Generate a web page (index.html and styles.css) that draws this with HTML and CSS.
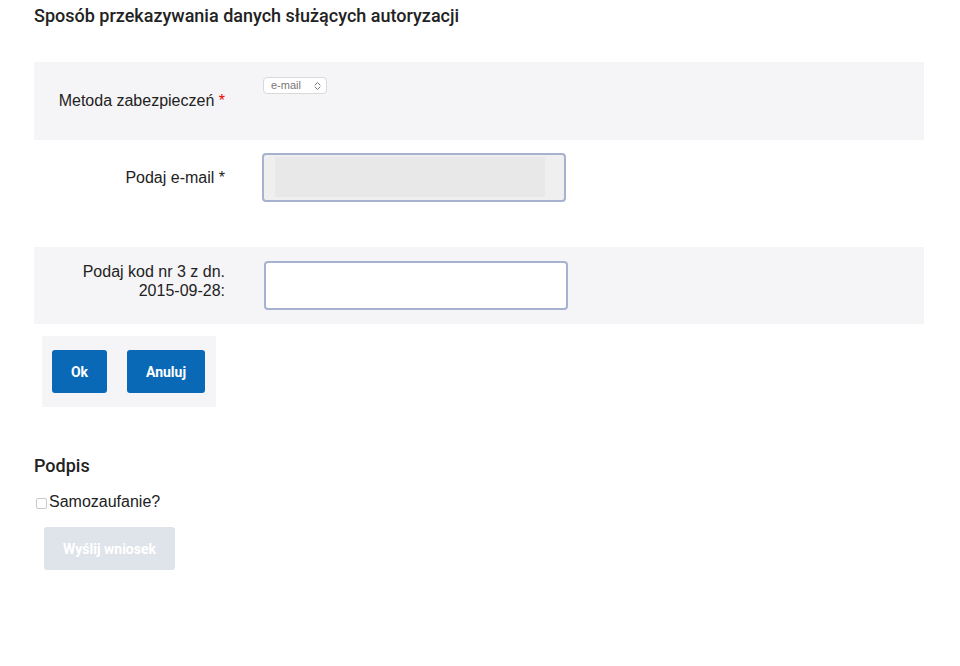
FILE: index.html
```html
<!DOCTYPE html>
<html lang="pl">
<head>
<meta charset="utf-8">
<title>Autoryzacja</title>
<link rel="stylesheet" href="styles.css">
</head>
<body>
<div class="page">
  <h1 class="title">Sposób przekazywania danych służących autoryzacji</h1>
  <div class="form">
    <div class="row row-method">
      <div class="label">Metoda zabezpieczeń <span class="req">*</span></div>
      <div class="field">
        <div class="select">
          <span class="select-text">e-mail</span>
          <svg class="chev" width="7" height="10" viewBox="0 0 7 10"><path d="M1 4 L3.5 1.5 L6 4 M1 6 L3.5 8.5 L6 6" fill="none" stroke="#777" stroke-width="1" stroke-linecap="round" stroke-linejoin="round"/></svg>
        </div>
      </div>
    </div>
    <div class="row row-email">
      <div class="label label-single">Podaj e-mail *</div>
      <div class="field">
        <div class="input input-filled"><span class="blur"></span></div>
      </div>
    </div>
    <div class="row row-code">
      <div class="label label-multi">Podaj kod nr 3 z dn. 2015-09-28:</div>
      <div class="field field-code">
        <div class="input"></div>
      </div>
    </div>
  </div>
  <div class="actions">
    <button class="btn btn-primary">Ok</button>
    <button class="btn btn-primary">Anuluj</button>
  </div>
  <h2 class="subtitle">Podpis</h2>
  <label class="check"><span class="box"></span>Samozaufanie?</label>
  <button class="btn btn-disabled">Wyślij wniosek</button>
</div>
</body>
</html>
```
FILE: styles.css
```css
* { box-sizing: border-box; }
html, body { margin: 0; padding: 0; background: #fff; }
body { font-family: "Liberation Sans", Arial, sans-serif; color: #222; }
.page { padding: 6px 36px 0 34px; width: 960px; }
.title {
  margin: 0 0 36px 0;
  font-family: Roboto, "Liberation Sans", sans-serif;
  font-weight: 500;
  font-size: 18px;
  line-height: 20px;
  color: #222;
}
.form { width: 890px; }
.row { display: flex; }
.row-method { height: 78px; background: #f5f5f7; align-items: center; }
.row-email { height: 107px; padding-top: 13px; align-items: flex-start; }
.row-code { height: 77px; background: #f5f5f7; padding-top: 14px; align-items: flex-start; }
.label {
  width: 191px;
  text-align: right;
  font-size: 16px;
  line-height: 18px;
  color: #222;
}
.req { color: #e00; }
.field { margin-left: 37px; }
.field-code { margin-left: 39px; }
.row-method .field { align-self: flex-start; margin-top: 15px; margin-left: 38px; }
.label-single { line-height: 49px; }
.label-multi { padding-left: 40px; margin-top: 1px; line-height: 19px; }
.select {
  width: 64px; height: 17px;
  border: 1px solid #d9d9d9;
  border-radius: 4px;
  background: #fff;
  display: flex; align-items: center; justify-content: space-between;
  padding: 0 5px 0 7px;
}
.select-text { font-size: 11px; color: #777; line-height: 15px; }
.chev { display: block; }
.input {
  width: 304px; height: 49px;
  border: 2px solid #a7b1d0;
  border-radius: 4px;
  background: #fff;
}
.input-filled { background: #efefef; padding: 2px 19px 3px 11px; }
.blur { display: block; height: 40px; background: #e8e8e8; }
.actions {
  margin: 12px 0 0 8px;
  width: 174px; height: 71px;
  background: #f5f5f7;
  display: flex; gap: 20px;
  padding: 14px 0 0 10px;
}
.btn {
  border: 0; border-radius: 3px;
  font-family: Roboto, "Liberation Sans", sans-serif;
  font-weight: 700; font-size: 14px;
  height: 43px; padding: 0 18px;
  color: #fff;
}
.btn-primary { background: #0a69b7; }
.actions .btn:first-child { width: 55px; padding: 0; }
.actions .btn:last-child { width: 78px; padding: 0; }
.subtitle {
  margin: 49px 0 0 0;
  font-family: Roboto, "Liberation Sans", sans-serif;
  font-weight: 500; font-size: 18px; line-height: 20px; color: #222;
}
.check {
  display: flex; align-items: center;
  margin-top: 17px; margin-left: 2px;
  font-size: 16px; line-height: 18px; color: #222;
}
.box {
  width: 11px; height: 11px;
  border: 1px solid #c9c9c9; border-radius: 2px;
  background: #fff; margin-right: 2px; margin-top: 2px;
}
.btn-disabled {
  display: block;
  margin: 16px 0 0 10px;
  width: 131px; padding: 0;
  background: #dfe3ea; color: #fff;
  font-size: 14px;
}
```
